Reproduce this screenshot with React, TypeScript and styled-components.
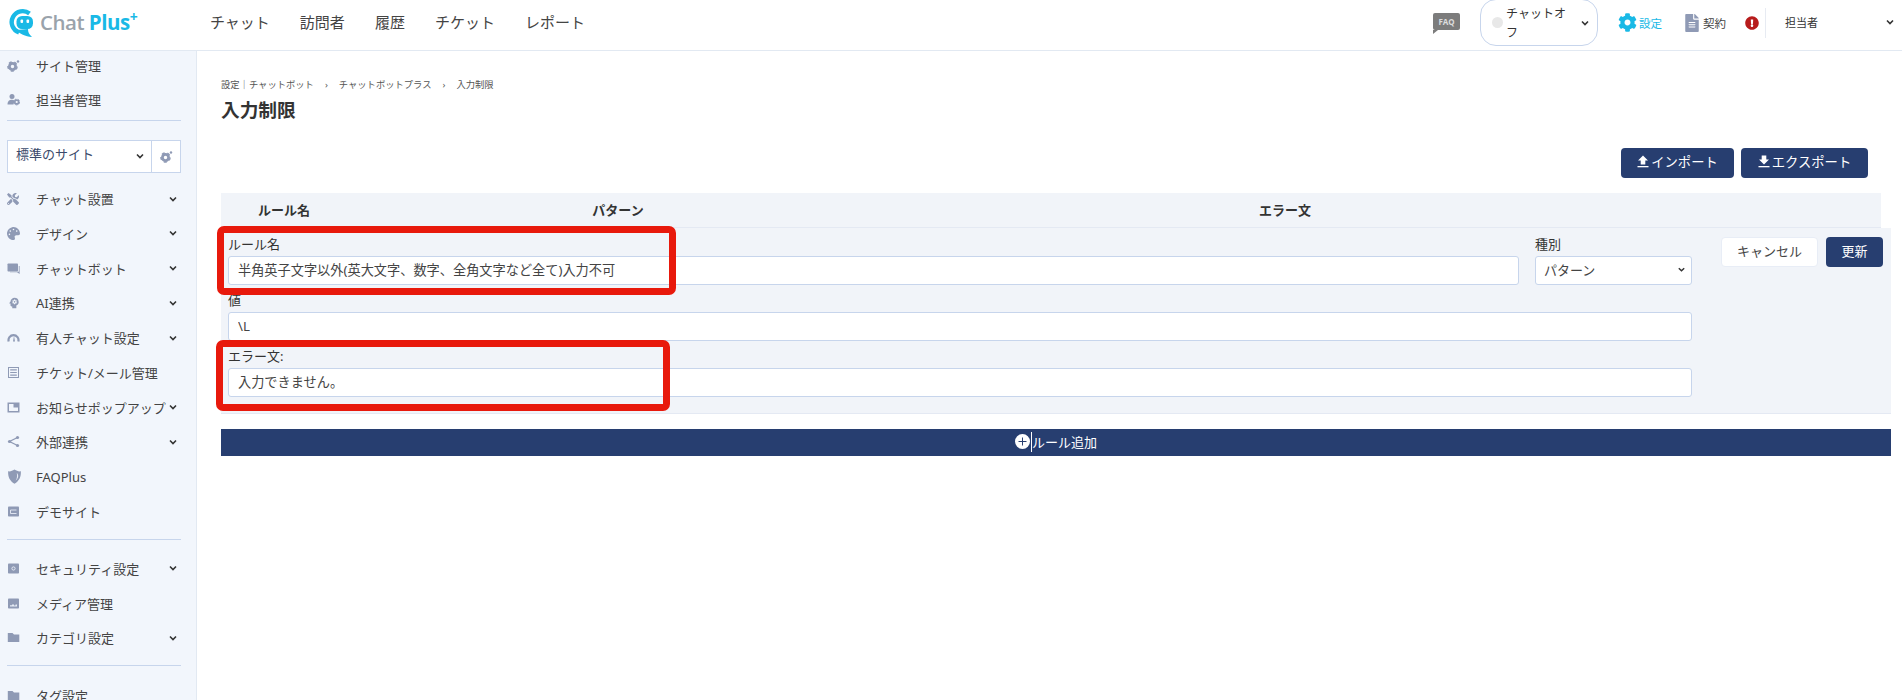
import styled, { createGlobalStyle } from 'styled-components'
import { ReactNode } from 'react'
import { FaCog, FaTools, FaPalette, FaExclamationCircle, FaFileAlt } from 'react-icons/fa'
import { MdPsychology } from 'react-icons/md'

const NAVY = '#273e70'
const ICON_GREY = '#8f9ab5'
const LINE = '#c7d5ec'
const SIDE_BG = '#f2f6fc'

const GlobalStyle = createGlobalStyle`
  html, body {
    margin: 0;
    height: 700px;
    overflow: hidden;
    background: #fff;
    font-family: "Noto Sans", "Noto Sans CJK JP", sans-serif;
    color: #333;
  }
  * { box-sizing: border-box; }
`

const Page = styled.div`
  height: 700px;
  overflow: hidden;
`

const Header = styled.header`
  height: 51px;
  display: flex;
  align-items: center;
  padding-bottom: 5px;
  border-bottom: 1px solid #e2e9f2;
  background: #fff;
`
const Logo = styled.div`
  width: 210px;
  padding-left: 7px;
  margin-bottom: 1px;
  display: flex;
  align-items: center;
  gap: 7px;
`
const LogoText = styled.span`
  font-family: "Open Sans", sans-serif;
  font-size: 20.5px;
  font-weight: 600;
  letter-spacing: -0.5px;
  color: #9aa3ab;
  white-space: nowrap;
  b {
    color: #19b9e6;
    font-weight: 700;
  }
  sup {
    color: #19b9e6;
    font-size: 14px;
    line-height: 0;
    font-weight: 700;
  }
`
const Nav = styled.nav`
  display: flex;
  gap: 30px;
  margin-bottom: 2px;
  font-size: 15px;
  color: #444;
`
const HeaderRight = styled.div`
  margin-left: auto;
  display: flex;
  align-items: center;
  height: 100%;
`
const FaqBadge = styled.div`
  position: relative;
  width: 27px;
  height: 17px;
  margin-right: 20px;
  margin-top: -3px;
  background: #7c7c7c;
  border-radius: 2px;
  color: #ddd;
  font-size: 8px;
  font-weight: 700;
  text-align: center;
  line-height: 17px;
  &::after {
    content: '';
    position: absolute;
    left: 0;
    bottom: -4px;
    border-left: 5px solid #7c7c7c;
    border-bottom: 4px solid transparent;
  }
`
const StatusPill = styled.div`
  width: 118px;
  height: 47px;
  border: 1px solid ${LINE};
  border-radius: 16px;
  display: flex;
  align-items: center;
  padding: 0 7px 0 11px;
  gap: 3px;
  font-size: 12px;
  line-height: 19px;
`
const StatusDot = styled.span`
  flex: none;
  width: 11px;
  height: 11px;
  border-radius: 50%;
  background: #e8e8e8;
`
const StatusText = styled.span`
  flex: 1;
  width: 60px;
`
const HeaderLink = styled.div<{ $cyan?: boolean; $width: number }>`
  display: flex;
  align-items: center;
  gap: 2px;
  width: ${(p) => p.$width}px;
  font-size: 11.5px;
  color: ${(p) => (p.$cyan ? '#19b9e6' : '#444')};
`
const Settings = styled.div`
  display: flex;
  height: 100%;
  margin-left: 20px;
  align-items: center;
`
const Alert = styled.div`
  width: 20px;
  display: flex;
  color: #b71c1c;
`
const UserBox = styled.div`
  display: flex;
  align-items: center;
  height: 30px;
  width: 137px;
  padding: 0 7px 1px 19px;
  border-left: 1px solid #e7ebf2;
  justify-content: space-between;
  font-size: 11px;
`

const Body = styled.div`
  display: flex;
  height: 649px;
`
const Sidebar = styled.aside`
  flex: none;
  width: 197px;
  padding: 0 15px 0 7px;
  background: ${SIDE_BG};
  border-right: 1px solid #e2e9f2;
  overflow: hidden;
`
const Group = styled.div<{ $top: number }>`
  padding-top: ${(p) => p.$top}px;
`
const Divider = styled.hr<{ $gap: number }>`
  border: none;
  border-top: 1px solid ${LINE};
  margin: ${(p) => p.$gap}px 0 0;
`
const SiteSelect = styled.div`
  display: flex;
  margin: 19px 0 12px;
  height: 33px;
  border: 1px solid ${LINE};
  background: #fff;
  font-size: 13px;
  color: #3a4a6b;
`
const SiteName = styled.div`
  flex: 1;
  display: flex;
  align-items: center;
  justify-content: space-between;
  padding: 0 6px 0 8px;
`
const SiteText = styled.span`
  padding-bottom: 6px;
`
const SiteGear = styled.div`
  width: 29px;
  display: flex;
  align-items: center;
  justify-content: center;
  border-left: 1px solid ${LINE};
  color: ${ICON_GREY};
`
const Item = styled.div`
  display: flex;
  align-items: center;
  height: 28px;
  margin-bottom: 6.75px;
  padding-right: 3px;
  font-size: 13px;
  white-space: nowrap;
  color: #444;
`
const ItemIcon = styled.span`
  flex: none;
  width: 29px;
  display: flex;
  align-items: center;
  color: ${ICON_GREY};
`
const ItemLabel = styled.span`
  flex: 1;
`

const Main = styled.main`
  position: relative;
  flex: 1;
  padding: 27px 12px 0 24px;
`
const Breadcrumb = styled.div`
  display: flex;
  gap: 11px;
  height: 13px;
  font-size: 9.3px;
  line-height: 13px;
  color: #555;
`
const Title = styled.h1`
  margin: 5px 0 0;
  font-size: 18.7px;
  line-height: 28px;
  font-weight: 700;
  color: #333;
`
const Toolbar = styled.div`
  display: flex;
  justify-content: flex-end;
  gap: 7px;
  margin-top: 24px;
  padding-right: 23px;
`
const PrimaryButton = styled.button<{ $width: number }>`
  display: flex;
  align-items: center;
  justify-content: center;
  gap: 2px;
  width: ${(p) => p.$width}px;
  height: 30px;
  border: none;
  border-radius: 4px;
  padding: 0 0 3px;
  background: ${NAVY};
  color: #fff;
  font: inherit;
  font-size: 13.3px;
`
const TableHead = styled.div`
  display: grid;
  grid-template-columns: 126px 542px 792px 1fr;
  align-items: center;
  margin: 15px 10px 0 0;
  height: 35px;
  padding-bottom: 2px;
  background: #f1f4f9;
  border-bottom: 1px solid #e4e9f3;
  font-size: 13px;
  font-weight: 700;
  text-align: center;
`
const EditRow = styled.div`
  display: flex;
  height: 186px;
  padding: 8px 8px 0 7px;
  background: #f1f4f9;
  border-bottom: 1px solid #e4e9f3;
`
const Form = styled.div`
  width: 1464px;
`
const FormLine = styled.div`
  display: flex;
  gap: 16px;
`
const Field = styled.label<{ $width?: number }>`
  display: block;
  flex: ${(p) => (p.$width ? `0 0 ${p.$width}px` : '1')};
  height: 56px;
  font-size: 13px;
  line-height: 16px;
`
const TextInput = styled.input`
  display: block;
  width: 100%;
  height: 29px;
  margin-top: 4px;
  padding: 0 9px 2px;
  border: 1px solid ${LINE};
  border-radius: 3px;
  background: #fff;
  font: inherit;
  font-size: 13.2px;
  color: #444;
  outline: none;
`
const SelectBox = styled.div`
  display: flex;
  align-items: center;
  justify-content: space-between;
  height: 29px;
  margin-top: 4px;
  padding: 0 5px 2px 8px;
  border: 1px solid ${LINE};
  border-radius: 3px;
  background: #fff;
  font-size: 13px;
  color: #444;
`
const RowActions = styled.div`
  display: flex;
  gap: 8px;
  margin: 1px 0 0 29px;
  align-items: flex-start;
`
const CancelButton = styled.button`
  width: 97px;
  height: 30px;
  border: 1px solid #e8edf6;
  border-radius: 4px;
  background: #fff;
  font: inherit;
  font-size: 13px;
  color: #444;
  padding: 0 0 3px;
`
const UpdateButton = styled.button`
  width: 57px;
  height: 30px;
  border: none;
  border-radius: 4px;
  background: ${NAVY};
  font: inherit;
  font-size: 13px;
  color: #fff;
  padding: 0 0 3px;
`
const AddBar = styled.div`
  display: flex;
  align-items: center;
  justify-content: center;
  height: 27px;
  margin-top: 15px;
  padding-bottom: 2px;
  background: ${NAVY};
  color: #fff;
  font-size: 13px;
`
const AddLabel = styled.span`
  border-left: 1px solid #fff;
  line-height: 20px;
  margin-left: 1px;
`
const Highlight = styled.div<{ $left: number; $top: number; $width: number; $height: number }>`
  position: absolute;
  left: ${(p) => p.$left}px;
  top: ${(p) => p.$top}px;
  width: ${(p) => p.$width}px;
  height: ${(p) => p.$height}px;
  border: 7px solid #e8190c;
  border-radius: 7px;
  pointer-events: none;
`

const Chevron = ({ size = 10 }: { size?: number }) => (
  <svg width={size} height={size} viewBox='0 0 10 10' fill='none' stroke='#333' strokeWidth='1.6'>
    <path d='M2 3.5 L5 6.5 L8 3.5' />
  </svg>
)

const ChatLogo = () => (
  <svg width='26' height='29' viewBox='0 0 26 29'>
    <path d='M22.5 5.5 A11 11 0 1 0 12 24.5' fill='none' stroke='#19b9e6' strokeWidth='4.4' />
    <path d='M9 22 C13 26 18 28.5 25 29 C22 26.5 21 24 21 21 Z' fill='#19b9e6' />
    <rect x='9.5' y='8' width='16.5' height='13' rx='5.5' fill='#19b9e6' />
    <rect x='13.5' y='11.5' width='2.6' height='3.6' rx='1' fill='#fff' />
    <rect x='19.5' y='11.5' width='2.6' height='3.6' rx='1' fill='#fff' />
  </svg>
)

// 12px filled side menu glyphs, all in the same grey
const Glyph = ({ children, size = 13 }: { children: ReactNode; size?: number }) => (
  <svg width={size} height={size} viewBox='0 0 13 13' fill={ICON_GREY}>
    {children}
  </svg>
)

const Cog = ({ x, y, r }: { x: number; y: number; r: number }) => (
  <g fill='none' stroke={ICON_GREY}>
    <circle cx={x} cy={y} r={r * 0.62} strokeWidth={r * 0.55} />
    <circle cx={x} cy={y} r={r * 0.92} strokeWidth={r * 0.28} strokeDasharray={`${r * 0.6} ${r * 0.55}`} />
  </g>
)

const SiteIcon = () => (
  <Glyph>
    <Cog x={5.5} y={7.5} r={5} />
    <circle cx='11' cy='2.5' r='1.2' />
  </Glyph>
)
const StaffIcon = () => (
  <Glyph>
    <circle cx='5' cy='3.5' r='2.5' />
    <path d='M0.5 11.5 C0.5 8 2.5 6.8 5 6.8 C6 6.8 6.8 7 7.5 7.5 L6.5 11.5 Z' />
    <Cog x={9.7} y={9} r={3.2} />
  </Glyph>
)
const BubbleIcon = () => (
  <Glyph>
    <rect x='0.5' y='1.5' width='10.5' height='8' rx='0.8' />
    <path d='M11.8 4 H12.6 V12 L10 10.2 H3 V9.8 H11.8 Z' />
  </Glyph>
)
const DomeIcon = () => (
  <Glyph>
    <path d='M1.7 10.5 A5 5 0 1 1 11.3 10.5' fill='none' stroke={ICON_GREY} strokeWidth='2.2' />
    <path d='M6 10.5 L7 5 L8 10.5 Z' />
  </Glyph>
)
const ListIcon = () => (
  <Glyph>
    <path d='M1 1 H12 V12 H1 Z M2 2 V11 H11 V2 Z' fillRule='evenodd' />
    <path d='M3.2 3.3 H9.8 V4.5 H3.2 Z M3.2 5.9 H9.8 V7.1 H3.2 Z M3.2 8.5 H9.8 V9.7 H3.2 Z' />
  </Glyph>
)
const PopupIcon = () => (
  <Glyph>
    <path d='M0.5 1.5 H12.5 V11.5 H0.5 Z M2 3 V10 H11 V3 Z' fillRule='evenodd' />
    <rect x='6.5' y='3' width='4.5' height='3.5' />
  </Glyph>
)
const ShareIcon = () => (
  <Glyph>
    <path d='M10.5 2.5 L2.5 6.5 L10.5 10.5' fill='none' stroke={ICON_GREY} strokeWidth='1.3' />
    <circle cx='10.5' cy='2.5' r='1.6' />
    <circle cx='2.5' cy='6.5' r='1.6' />
    <circle cx='10.5' cy='10.5' r='1.6' />
  </Glyph>
)
const ShieldIcon = () => (
  <Glyph size={15}>
    <path d='M1 2 C3 2.5 4.5 1.5 6.5 0.5 C8.5 1.5 10 2.5 12 2 C12.3 7 10.5 10.5 6.5 12.8 C2.5 10.5 0.7 7 1 2 Z' />
    <path d='M8.5 3.5 C10.5 5 10 8.5 7.5 10 C9 8 8.8 5.5 8.5 3.5 Z' fill='#e6ebf5' />
  </Glyph>
)
const DemoIcon = () => (
  <Glyph>
    <rect x='1' y='1.5' width='11' height='10' rx='0.8' />
    <path d='M9.5 5 H3.5 V8.5 H9.5' fill='none' stroke='#e6ebf5' strokeWidth='0.9' />
  </Glyph>
)
const SecurityIcon = () => (
  <Glyph>
    <rect x='1' y='1.5' width='11' height='10' rx='0.8' />
    <circle cx='6.5' cy='6.5' r='1.6' fill='none' stroke='#e6ebf5' strokeWidth='1' />
  </Glyph>
)
const MediaIcon = () => (
  <Glyph>
    <rect x='1' y='1.5' width='11' height='10' rx='0.8' />
    <path d='M3 9.5 V8.3 H5 V7.5 H7 V8.5 H8.5 V7.5 H10 V9.5 Z' fill='#e6ebf5' />
  </Glyph>
)
const FolderIcon = () => (
  <Glyph>
    <path d='M0.8 2 H5.5 L7 3.5 H12.3 V11 H0.8 Z' />
  </Glyph>
)
const ArrowGlyph = ({ up }: { up?: boolean }) => (
  <svg width='12' height='13' viewBox='0 0 12 13' fill='#fff'>
    <path d={up ? 'M6 0.5 L11 5.5 H8.3 V9.5 H3.7 V5.5 H1 Z' : 'M3.7 0.5 H8.3 V4.5 H11 L6 9.5 L1 4.5 H3.7 Z'} />
    <rect x='0.5' y='11' width='11' height='1.3' />
  </svg>
)
const AddGlyph = () => (
  <svg width='15' height='15' viewBox='0 0 15 15'>
    <circle cx='7.5' cy='7.5' r='7.5' fill='#fff' />
    <path d='M3.5 7.5 H11.5 M7.5 3.5 V11.5' stroke={NAVY} strokeWidth='1' />
  </svg>
)

interface SideItemProps {
  icon: ReactNode
  label: string
  more?: boolean
}
const SideItem = ({ icon, label, more }: SideItemProps) => (
  <Item>
    <ItemIcon>{icon}</ItemIcon>
    <ItemLabel>{label}</ItemLabel>
    {more ? <Chevron /> : null}
  </Item>
)

const App = () => (
  <Page>
    <GlobalStyle />
    <Header>
      <Logo>
        <ChatLogo />
        <LogoText>
          Chat <b>Plus</b>
          <sup>+</sup>
        </LogoText>
      </Logo>
      <Nav>
        <span>チャット</span>
        <span>訪問者</span>
        <span>履歴</span>
        <span>チケット</span>
        <span>レポート</span>
      </Nav>
      <HeaderRight>
        <FaqBadge>FAQ</FaqBadge>
        <StatusPill>
          <StatusDot />
          <StatusText>チャットオフ</StatusText>
          <Chevron />
        </StatusPill>
        <Settings>
          <HeaderLink $cyan $width={65}>
            <FaCog size={19} color='#19b9e6' />
            設定
          </HeaderLink>
          <HeaderLink $width={62}>
            <FaFileAlt size={18} color={ICON_GREY} />
            契約
          </HeaderLink>
          <Alert>
            <FaExclamationCircle size={14} />
          </Alert>
          <UserBox>
            担当者
            <Chevron />
          </UserBox>
        </Settings>
      </HeaderRight>
    </Header>
    <Body>
      <Sidebar>
        <SideItem icon={<SiteIcon />} label='サイト管理' />
        <SideItem icon={<StaffIcon />} label='担当者管理' />
        <Divider $gap={-1} />
        <SiteSelect>
          <SiteName>
            <SiteText>標準のサイト</SiteText>
            <Chevron />
          </SiteName>
          <SiteGear>
            <SiteIcon />
          </SiteGear>
        </SiteSelect>
        <SideItem icon={<FaTools size={12} />} label='チャット設置' more />
        <SideItem icon={<FaPalette size={13} />} label='デザイン' more />
        <SideItem icon={<BubbleIcon />} label='チャットボット' more />
        <SideItem icon={<MdPsychology size={14} />} label='AI連携' more />
        <SideItem icon={<DomeIcon />} label='有人チャット設定' more />
        <SideItem icon={<ListIcon />} label='チケット/メール管理' />
        <SideItem icon={<PopupIcon />} label='お知らせポップアップ' more />
        <SideItem icon={<ShareIcon />} label='外部連携' more />
        <SideItem icon={<ShieldIcon />} label='FAQPlus' />
        <SideItem icon={<DemoIcon />} label='デモサイト' />
        <Divider $gap={14} />
        <Group $top={14}>
          <SideItem icon={<SecurityIcon />} label='セキュリティ設定' more />
          <SideItem icon={<MediaIcon />} label='メディア管理' />
          <SideItem icon={<FolderIcon />} label='カテゴリ設定' more />
          <Divider $gap={13} />
        </Group>
        <Group $top={16}>
          <SideItem icon={<FolderIcon />} label='タグ設定' />
        </Group>
      </Sidebar>
      <Main>
        <Breadcrumb>
          <span>設定｜チャットボット</span>
          <span>›</span>
          <span>チャットボットプラス</span>
          <span>›</span>
          <span>入力制限</span>
        </Breadcrumb>
        <Title>入力制限</Title>
        <Toolbar>
          <PrimaryButton $width={113}>
            <ArrowGlyph up />
            インポート
          </PrimaryButton>
          <PrimaryButton $width={127}>
            <ArrowGlyph />
            エクスポート
          </PrimaryButton>
        </Toolbar>
        <TableHead>
          <span>ルール名</span>
          <span>パターン</span>
          <span>エラー文</span>
        </TableHead>
        <EditRow>
          <Form>
            <FormLine>
              <Field>
                ルール名
                <TextInput readOnly value='半角英子文字以外(英大文字、数字、全角文字など全て)入力不可' />
              </Field>
              <Field as='div' $width={157}>
                種別
                <SelectBox>
                  パターン
                  <Chevron size={9} />
                </SelectBox>
              </Field>
            </FormLine>
            <Field>
              値
              <TextInput readOnly value='\L' />
            </Field>
            <Field>
              エラー文:
              <TextInput readOnly value='入力できません。' />
            </Field>
          </Form>
          <RowActions>
            <CancelButton>キャンセル</CancelButton>
            <UpdateButton>更新</UpdateButton>
          </RowActions>
        </EditRow>
        <AddBar>
          <AddGlyph />
          <AddLabel>ルール追加</AddLabel>
        </AddBar>
        <Highlight $left={20} $top={175} $width={459} $height={69} />
        <Highlight $left={19} $top={289} $width={454} $height={71} />
      </Main>
    </Body>
  </Page>
)

export default App
